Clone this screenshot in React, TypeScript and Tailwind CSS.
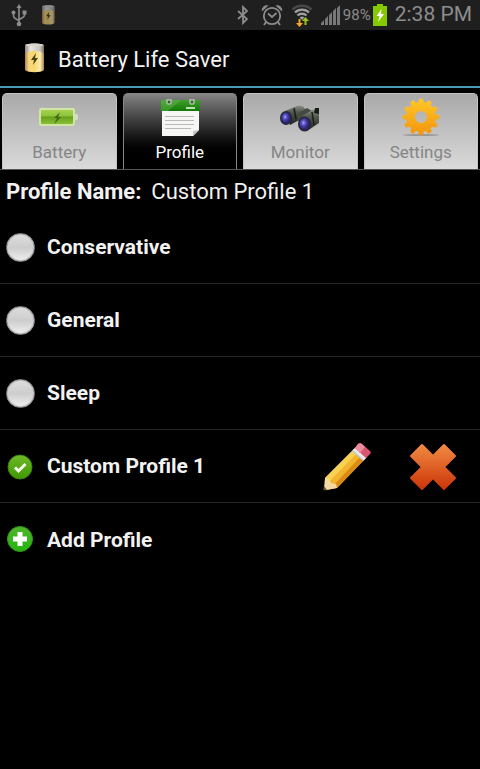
import { useState, type ReactNode } from "react";

const profiles = ["Conservative", "General", "Sleep", "Custom Profile 1"];

const tabs = [
  { label: "Battery", icon: <BatteryIcon /> },
  { label: "Profile", icon: <NotepadIcon /> },
  { label: "Monitor", icon: <BinocularsIcon /> },
  { label: "Settings", icon: <GearIcon /> },
];

export default function App() {
  return (
    <div className="flex min-h-screen flex-col bg-black font-['Roboto',sans-serif] text-[#f2f2f2]">
      <StatusBar />
      <header className="flex h-[58px] items-center border-b-2 border-[#4b9ab5] pl-[22px]">
        <CellIcon className="h-8 w-6" />
        <h1 className="pt-[2px] pl-3 text-[22px]">Battery Life Saver</h1>
      </header>
      <Tabs />
      <main>
        <p className="flex h-[41px] items-center gap-[10px] px-[6px] pt-[2px] text-[22px]">
          <span className="font-bold">Profile Name:</span>
          <span>Custom Profile 1</span>
        </p>
        <ProfileList />
      </main>
    </div>
  );
}

function StatusBar() {
  return (
    <div className="flex h-[30px] items-center justify-between bg-[#1f1f1f] pr-2 pl-[10px] text-[#8c8c8c]">
      <div className="flex items-center gap-3">
        <UsbIcon />
        <CellIcon className="h-[22px] w-4 opacity-60" />
      </div>
      <div className="flex items-center">
        <BluetoothIcon />
        <AlarmIcon />
        <WifiIcon />
        <SignalIcon />
        <span className="pr-[2px] pl-[3px] text-[15px]">98%</span>
        <ChargeIcon />
        <span className="pl-2 text-[21px]">2:38 PM</span>
      </div>
    </div>
  );
}

function Tabs() {
  const [active, setActive] = useState("Profile");

  return (
    <nav className="grid grid-cols-4 gap-[6px] border-b border-[#555] px-[2px] pt-[5px]">
      {tabs.map((tab) => (
        <button
          key={tab.label}
          type="button"
          aria-pressed={tab.label === active}
          onClick={() => setActive(tab.label)}
          className={
            tab.label === active
              ? "flex h-[76px] flex-col items-center rounded-t-[5px] border-x border-t border-[#888] bg-linear-to-b from-[#858585] to-black to-85% pt-1 text-white"
              : "flex h-[76px] flex-col items-center rounded-t-[5px] border-x border-t border-[#c4c4c4] bg-linear-to-b from-[#a9a9a9] to-[#dadada] pt-1 text-[#858585]"
          }
        >
          {tab.icon}
          <span className="pt-[2px] text-[17px] leading-6">{tab.label}</span>
        </button>
      ))}
    </nav>
  );
}

function ProfileList() {
  const [selected, setSelected] = useState("Custom Profile 1");

  return (
    <ul>
      {profiles.map((name) => (
        <Row key={name}>
          <label className="flex flex-1 items-center gap-3">
            <input
              type="radio"
              name="profile"
              className="peer sr-only"
              checked={name === selected}
              onChange={() => setSelected(name)}
            />
            {name === selected ? <CheckDot /> : <EmptyDot />}
            <span className="pt-[2px]">{name}</span>
          </label>
          {name === "Custom Profile 1" && (
            <div className="flex gap-9 pr-[22px]">
              <button type="button" aria-label="Edit profile">
                <PencilIcon />
              </button>
              <button type="button" aria-label="Delete profile">
                <CrossIcon />
              </button>
            </div>
          )}
        </Row>
      ))}
      <Row>
        <button type="button" className="flex flex-1 items-center gap-3">
          <PlusDot />
          <span className="pt-[2px]">Add Profile</span>
        </button>
      </Row>
    </ul>
  );
}

function Row({ children }: { children: ReactNode }) {
  return (
    <li className="flex h-[73px] items-center border-b border-[#252525] pl-[6px] text-[21px] font-bold last:border-b-0">
      {children}
    </li>
  );
}

/* Status bar icons */

function UsbIcon() {
  return (
    <svg viewBox="0 0 18 24" className="h-6 w-[18px]" fill="none" stroke="currentColor" strokeWidth="1.6">
      <path d="M9 4v17M3.500 10v3c0 3 3 2 5.500 5M14.500 10v2c0 3-3 2-5.500 5" />
      <path d="M9 1 6.500 5h5z" fill="currentColor" stroke="none" />
      <circle cx="9" cy="21" r="2.300" fill="currentColor" stroke="none" />
      <circle cx="3.500" cy="9.500" r="2" fill="currentColor" stroke="none" />
      <path d="M12.500 7.500h4v4h-4z" fill="currentColor" stroke="none" />
    </svg>
  );
}

function CellIcon({ className }: { className: string }) {
  return (
    <svg viewBox="0 0 24 32" className={className}>
      <defs>
        <linearGradient id="cell" x2="1">
          <stop stopColor="#b98238" />
          <stop offset=".2" stopColor="#f5d686" />
          <stop offset=".5" stopColor="#f8d96c" />
          <stop offset=".8" stopColor="#fbeab5" />
          <stop offset="1" stopColor="#a98545" />
        </linearGradient>
        <linearGradient id="cellTop" x2="1">
          <stop stopColor="#92877c" />
          <stop offset=".3" stopColor="#ebe8e2" />
          <stop offset=".8" stopColor="#c6c1ba" />
          <stop offset="1" stopColor="#786c60" />
        </linearGradient>
      </defs>
      <path d="M3 4v24c3 3 16 3 19 0V4z" fill="url(#cell)" />
      <path d="M3 3v9c2-4 17-4 19 0V3c-3-2-16-2-19 0z" fill="url(#cellTop)" />
      <ellipse cx="12.500" cy="3" rx="9" ry="1.500" fill="#d9d6d0" />
      <path d="m14 11-5 7h3l-1 5 5-7h-3z" fill="#4b4013" />
    </svg>
  );
}

function BluetoothIcon() {
  return (
    <svg viewBox="0 0 14 20" className="mr-[11px] h-5 w-[14px]" fill="none" stroke="currentColor" strokeWidth="1.800">
      <path d="m2 6 9 8-4 4V2l4 4-9 8" />
    </svg>
  );
}

function AlarmIcon() {
  return (
    <svg viewBox="0 0 22 22" className="mr-2 h-[22px] w-[22px]" fill="none" stroke="currentColor" strokeWidth="1.800">
      <circle cx="11" cy="12" r="8.200" />
      <path d="m7 9.500 4 3.500 4.500-4M5 18l-2 3M17 18l2 3" />
      <path d="M1 7.500A5 5 0 0 1 7.500 1.500zM21 7.500a5 5 0 0 0-6.500-6z" fill="currentColor" stroke="none" />
    </svg>
  );
}

function WifiIcon() {
  return (
    <svg viewBox="0 0 22 24" className="mr-2 h-6 w-[22px]" fill="none" strokeWidth="2.400">
      <path d="M1.500 6.500a14 14 0 0 1 19 0" stroke="#484848" />
      <path d="M4 9.500a10 10 0 0 1 14 0M6.500 12.500a6.500 6.500 0 0 1 9 0" stroke="#a0a0a0" />
      <path d="M8.500 14.500a4 4 0 0 1 5 0L11 17z" fill="#a0a0a0" />
      <path d="M9.500 16v4H12l-3.500 4L5 20h2.500v-4z" fill="#f3a72e" />
      <path d="M13.500 22v-4H11l3.500-4 3.500 4h-2.500v4z" fill="#9bc619" />
    </svg>
  );
}

function SignalIcon() {
  return (
    <svg viewBox="0 0 19 20" className="h-5 w-[19px]" fill="#777">
      <path d="M0 20v-2l3-3v5zM4 20v-6l3-3v9zM8 20V10l3-3v13zM12 20V6l3-3v17zM16 20V3l3-3v20z" />
    </svg>
  );
}

function ChargeIcon() {
  return (
    <svg viewBox="0 0 14 22" className="h-[22px] w-[14px]">
      <path d="M4 0h6v2h4v20H0V2h4z" fill="#86c900" />
      <path d="M8.500 5 3.500 12h3L5 18l6-8H8z" fill="#fff" />
    </svg>
  );
}

/* Tab icons */

function BatteryIcon() {
  return (
    <svg viewBox="0 0 40 40" className="size-10">
      <defs>
        <linearGradient id="batt" x2="0" y2="1">
          <stop stopColor="#a6d04f" />
          <stop offset=".4" stopColor="#8fc63d" />
          <stop offset=".5" stopColor="#69a01c" />
          <stop offset="1" stopColor="#86c035" />
        </linearGradient>
      </defs>
      <rect x="35" y="16" width="4" height="6" rx="1.500" fill="#d3dcc8" />
      <rect x="0" y="10" width="36" height="18" rx="2" fill="#d0e5a6" />
      <rect x="2" y="12" width="32" height="14" rx="1" fill="url(#batt)" />
      <path d="m21 14-6 6h3l-3 6 7-7h-3z" fill="#476419" />
    </svg>
  );
}

function NotepadIcon() {
  return (
    <svg viewBox="0 0 40 40" className="size-10">
      <defs>
        <linearGradient id="pad" x2="0" y2="1">
          <stop stopColor="#43a02c" />
          <stop offset="1" stopColor="#107908" />
        </linearGradient>
      </defs>
      <path d="M2 10h37v22l-6 6H2z" fill="#f6f6f4" />
      <path d="M33 38v-5l6-1z" fill="#c3c3c3" />
      <path d="M1 2h39v11H1z" fill="url(#pad)" />
      <path d="M1 2h20L8 13H1z" fill="#5db548" opacity=".5" />
      <path d="M6 1h6v3a3 3 0 0 1-6 0zM29 1h6v3a3 3 0 0 1-6 0z" fill="#9db499" />
      <circle cx="9" cy="4" r="1.200" fill="#2b5f22" />
      <circle cx="32" cy="4" r="1.200" fill="#2b5f22" />
      <path d="M26 10h9" stroke="#bde2b4" strokeWidth="2" />
      <path d="M5 18.500h29M5 22.500h29M5 26.500h29M5 30.500h26" stroke="#b9bab9" />
    </svg>
  );
}

function BinocularsIcon() {
  return (
    <svg viewBox="0 0 40 40" className="size-10">
      <defs>
        <linearGradient id="barrel" x2="0" y2="1">
          <stop stopColor="#878d82" />
          <stop offset=".35" stopColor="#50564d" />
          <stop offset="1" stopColor="#20231f" />
        </linearGradient>
        <radialGradient id="lens" cx=".4" cy=".4">
          <stop stopColor="#a9a4f0" />
          <stop offset=".5" stopColor="#4f46b8" />
          <stop offset="1" stopColor="#2b2674" />
        </radialGradient>
      </defs>
      <path d="m5 13 12-5c4-1 7 0 8 3l-2 9-13 7z" fill="url(#barrel)" />
      <path d="m17 16 10-6 5 3-8 8-6 2z" fill="#454b40" />
      <path d="m22 18 10-6c4-1 7 1 7 4v9l-12 8z" fill="url(#barrel)" />
      <path d="M35 10h4v6l-5-1z" fill="#191b17" />
      <path d="m14 10 2 11M32 14l2 13" stroke="#1b1d19" strokeWidth="1.500" />
      <ellipse cx="6" cy="20" rx="6" ry="7" fill="#25263a" />
      <ellipse cx="6" cy="20" rx="4.500" ry="5.500" fill="url(#lens)" />
      <ellipse cx="24.500" cy="26" rx="6.500" ry="7.500" fill="#25263a" />
      <ellipse cx="24.500" cy="26" rx="5" ry="6" fill="url(#lens)" />
    </svg>
  );
}

function GearIcon() {
  return (
    <svg viewBox="0 0 40 40" className="size-10">
      <defs>
        <linearGradient id="gear" x1="0" y1="0" x2="0" y2="38" gradientUnits="userSpaceOnUse">
          <stop stopColor="#ffc928" />
          <stop offset="1" stopColor="#f2930c" />
        </linearGradient>
      </defs>
      <ellipse cx="20" cy="37" rx="18" ry="1" fill="#989898" />
      <circle cx="20" cy="19" r="10.500" fill="none" stroke="url(#gear)" strokeWidth="9" />
      {/* twelve round-ended teeth, drawn as spokes from the ring */}
      <path
        d="M20 7V3M26 8.600l2-3.400M30.400 13l3.400-2M32 19h4M30.400 25l3.400 2M26 29.400l2 3.400M20 31v4M14 29.400l-2 3.400M9.600 25l-3.400 2M8 19H4M9.600 13l-3.400-2M14 8.600l-2-3.400"
        fill="none"
        stroke="url(#gear)"
        strokeWidth="5"
        strokeLinecap="round"
      />
    </svg>
  );
}

/* List icons */

function EmptyDot() {
  return (
    <span className="size-[29px] rounded-full border border-[#8a8a8a] bg-linear-to-b from-[#dedede] via-[#cdcdcd] to-[#f0f0f0] inset-ring inset-ring-[#c2c2c2] peer-focus-visible:ring-2 peer-focus-visible:ring-[#4b9ab5]" />
  );
}

function CheckDot() {
  return (
    <svg viewBox="0 0 29 29" className="size-[29px]">
      <defs>
        <linearGradient id="check" x2="0" y2="1">
          <stop stopColor="#6fb92a" />
          <stop offset="1" stopColor="#409803" />
        </linearGradient>
      </defs>
      <circle cx="14" cy="15" r="12" fill="url(#check)" stroke="#3a850b" />
      <path d="m9 15.500 3.500 3.500 7-7" fill="none" stroke="#f4fbea" strokeWidth="3" />
    </svg>
  );
}

function PlusDot() {
  return (
    <svg viewBox="0 0 29 29" className="size-[29px]">
      <defs>
        <linearGradient id="plus" x2="0" y2="1">
          <stop stopColor="#4eb529" />
          <stop offset="1" stopColor="#25b512" />
        </linearGradient>
      </defs>
      <circle cx="14" cy="14" r="12.500" fill="url(#plus)" stroke="#31941b" />
      <path d="M14 7v14M7 14h14" stroke="#fff" strokeWidth="5" />
    </svg>
  );
}

function PencilIcon() {
  return (
    <svg viewBox="0 0 50 50" className="size-[50px]">
      <path d="M3 37 32 8l11 10-28 29-11 2z" fill="#f2b52d" />
      <path d="M3 37 32 8l4 3L7 41z" fill="#f9d254" />
      <path d="m11 45 28-30 4 3-28 29z" fill="#d98b16" />
      <path d="m3 37 4 1 2 4 5 1 1 4-11 2c-2 0-2-1-2-2z" fill="#f5d9a0" />
      <path d="m2 45 3 4-2 .500c-1 0-2-1-1.500-2z" fill="#6a5438" />
      <path d="m30 10 4-4 11 10-4 4z" fill="#c3cad0" />
      <path d="m31 9 2-2 11 10-2 2z" fill="#e7ebee" />
      <path d="m33 7 3-4c1-1 3-1 4 0l8 7c1 1 1 2 0 3l-4 4z" fill="#d9546f" />
      <path d="m33 7 3-4c1-1 3-1 4 0l3 3-5 6z" fill="#ee8b9e" />
    </svg>
  );
}

function CrossIcon() {
  return (
    <svg viewBox="0 0 50 50" className="size-[50px]">
      <defs>
        <linearGradient id="cross" x2="0" y2="1">
          <stop stopColor="#f08a42" />
          <stop offset="1" stopColor="#cc3508" />
        </linearGradient>
      </defs>
      <path
        d="M14 4 25 15 36 4 47 15 36 26 47 37 36 48 25 37 14 48 3 37 14 26 3 15z"
        fill="url(#cross)"
        stroke="url(#cross)"
        strokeWidth="2"
        strokeLinejoin="round"
      />
    </svg>
  );
}
